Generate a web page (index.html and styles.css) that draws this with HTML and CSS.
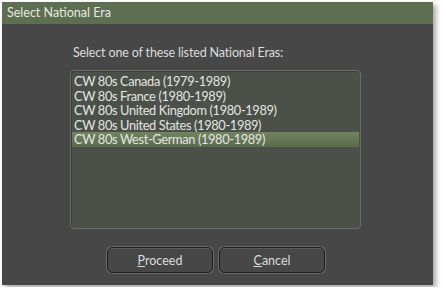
FILE: index.html
```html
<!DOCTYPE html>
<html lang="en">
<head>
    <meta charset="UTF-8">
    <title>Select National Era</title>
    <link rel="stylesheet" href="styles.css">
</head>
<body>
    <div class="window">
        <div class="titlebar">Select National Era</div>

        <div class="content">
            <div class="prompt">Select one of these listed National Eras:</div>

            <ul class="era-list">
                <li>CW 80s Canada (1979-1989)</li>
                <li>CW 80s France (1980-1989)</li>
                <li>CW 80s United Kingdom (1980-1989)</li>
                <li>CW 80s United States (1980-1989)</li>
                <li class="selected">CW 80s West-German (1980-1989)</li>
            </ul>

            <div class="buttons">
                <button><u>P</u>roceed</button>
                <button><u>C</u>ancel</button>
            </div>
        </div>
    </div>
</body>
</html>
```

FILE: styles.css
```css
body {
    margin: 0;
    padding: 0;
    background-color: #ffffff;
    font-family: Lato, "Noto Sans", sans-serif;
}

.window {
    margin: 2px;
    width: 431px;
    height: 283px;
    background-color: #474747;
    box-shadow: 3px 3px 5px rgba(0, 0, 0, 0.35);
    display: flex;
    flex-direction: column;
}

.titlebar {
    height: 22px;
    line-height: 21px;
    padding-left: 5px;
    background-color: #5e6e50;
    color: #e6e9e2;
    font-size: 12.5px;
}

.content {
    flex: 1;
    display: flex;
    flex-direction: column;
    padding: 21px 72px 0 68px;
}

.prompt {
    padding-left: 3px;
    font-size: 12.5px;
    letter-spacing: -0.15px;
    color: #dcdcdc;
    height: 25px;
}

.era-list {
    list-style: none;
    margin: 0;
    padding: 3px 1px 2px;
    height: 159px;
    box-sizing: border-box;
    background-color: #4b5049;
    border: 1px solid #6a6d68;
    border-radius: 4px;
    box-shadow: inset 1px 1px 0 #3a3d38;
}

.era-list li {
    height: 14.6px;
    line-height: 14.6px;
    padding-left: 2px;
    font-size: 12.8px;
    letter-spacing: -0.35px;
    color: #e4e6e2;
    white-space: nowrap;
    overflow: hidden;
}

.era-list li.selected {
    background: linear-gradient(#72845e, #5a6a4c);
}

.buttons {
    display: flex;
    justify-content: center;
    gap: 6px;
    margin-top: 18px;
    margin-left: -68px;
    margin-right: -72px;
    padding-right: 3px;
}

.buttons button {
    width: 106px;
    height: 26px;
    background-color: #474747;
    color: #dcdcdc;
    font-family: inherit;
    font-size: 12.5px;
    border: 1px solid #1f1f1f;
    border-radius: 5px;
    box-shadow: 0 0 0 1px #6a6a6a, inset 0 1px 0 #5a5a5a;
}
```
